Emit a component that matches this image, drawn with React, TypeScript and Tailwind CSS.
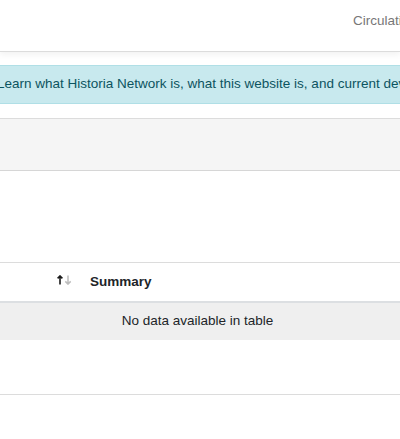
import React from "react";

export default function App() {
  return (
    <div
      className="w-[400px] h-[439px] overflow-hidden bg-white text-[#212529]"
      style={{ fontFamily: '"Liberation Sans", Arial, sans-serif' }}
    >
      {/* nav */}
      <div className="relative h-[52px] border-b border-[#dcdcdc] shadow-[0_3px_6px_rgba(0,0,0,0.05)] flex items-center pl-[353px] pb-[8px]">
        <span className="whitespace-nowrap text-[13.5px] text-[#777]">Circulation</span>
      </div>

      {/* alert area */}
      <div className="h-[67px] pt-[13px] border-b border-[#dcdcdc]">
        <div className="-ml-[20px] w-[440px] h-[39px] bg-[#c8e9ee] border border-[#b0dfe6] flex items-center pl-[16px] overflow-hidden">
          <span className="whitespace-nowrap text-[13.5px] text-[#0c5460]">
            Learn what Historia Network is, what this website is, and current development status.
          </span>
        </div>
      </div>

      {/* gray band */}
      <div className="h-[52px] bg-[#f5f5f5] border-b border-[#d6d6d6]" />

      {/* white area */}
      <div className="h-[92px] border-b border-[#dcdcdc]" />

      {/* table header */}
      <div className="h-[40px] flex items-center border-b-2 border-[#dcdfe2]">
        <div className="w-[90px] flex justify-end items-center pr-[18px] gap-[1px] pb-[4px]">
          <svg width="6" height="10" viewBox="0 0 6 10" className="block">
            <path d="M3 9.5V1M0.6 3.4L3 1L5.4 3.4" stroke="#1a1a1a" strokeWidth="1.6" fill="none" />
          </svg>
          <svg width="8" height="10" viewBox="0 0 8 10" className="block">
            <path d="M4 0.5V9M1.3 6.4L4 9.1L6.7 6.4" stroke="#bdbdbd" strokeWidth="1.5" fill="none" />
          </svg>
        </div>
        <span className="font-bold text-[13.5px] text-[#212529]">Summary</span>
      </div>

      {/* empty row */}
      <div className="h-[37px] bg-[#efefef] flex items-center justify-center pr-[5px]">
        <span className="text-[13.5px] text-[#212529]">No data available in table</span>
      </div>

      <div className="h-[55px] border-b border-[#dcdcdc]" />
    </div>
  );
}
